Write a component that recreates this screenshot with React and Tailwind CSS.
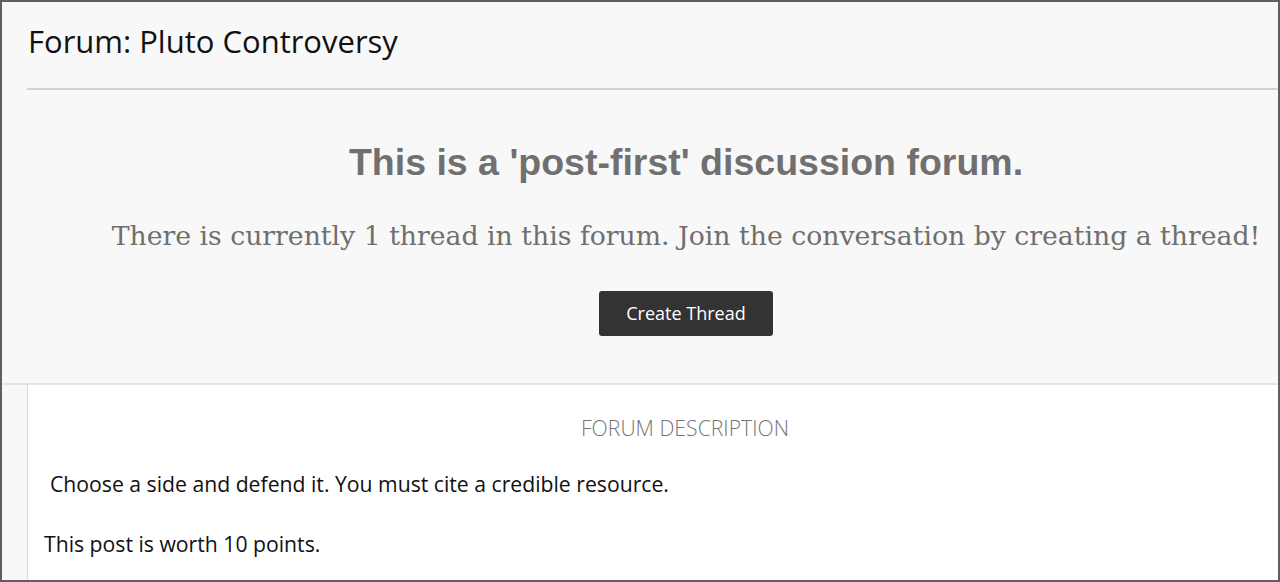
import React from "react";

const App = () => {
  return (
    <div className="w-[1280px] h-[582px] overflow-hidden border-2 border-[#5f5f5f] bg-[#f8f8f8] flex flex-col font-['Open_Sans',sans-serif]">
      {/* Header */}
      <div className="pl-[26px] pt-[19px] h-[86px]">
        <h1 className="text-[31px] leading-[40px] text-[#111]">Forum: Pluto Controversy</h1>
      </div>
      <div className="ml-[25px] h-[2px] bg-[#d3d3d3]" />

      {/* Post-first notice */}
      <div className="h-[295px] flex flex-col items-center pt-[49px] pl-[92px] border-b-2 border-[#e3e3e3]">
        <h2 className="font-['Liberation_Sans',Arial,sans-serif] font-bold text-[37.5px] leading-[46px] text-[#707070]">
          This is a 'post-first' discussion forum.
        </h2>
        <p className="mt-[33px] font-['DejaVu_Serif',Georgia,serif] text-[26.7px] leading-[36px] text-[#6f6f6f] whitespace-nowrap">
          There is currently 1 thread in this forum. Join the conversation by creating a thread!
        </p>
        <button
          type="button"
          className="mt-[37px] w-[174px] h-[45px] rounded-[3px] bg-[#333] text-white text-[18px]"
        >
          Create Thread
        </button>
      </div>

      {/* Description */}
      <div className="flex flex-1">
        <div className="w-[25px]" />
        <div className="flex-1 bg-white border-l border-[#dcdcdc] pt-[28px]">
          <p className="text-center text-[21.2px] leading-[30px] text-[#757575] font-light pl-[64px]">
            FORUM DESCRIPTION
          </p>
          <p className="mt-[26px] ml-[22px] text-[21.2px] leading-[30px] text-[#111]">
            Choose a side and defend it. You must cite a credible resource.
          </p>
          <p className="mt-[30px] ml-[16px] text-[21.2px] leading-[30px] text-[#111]">
            This post is worth 10 points.
          </p>
        </div>
      </div>
    </div>
  );
};

export default App;
